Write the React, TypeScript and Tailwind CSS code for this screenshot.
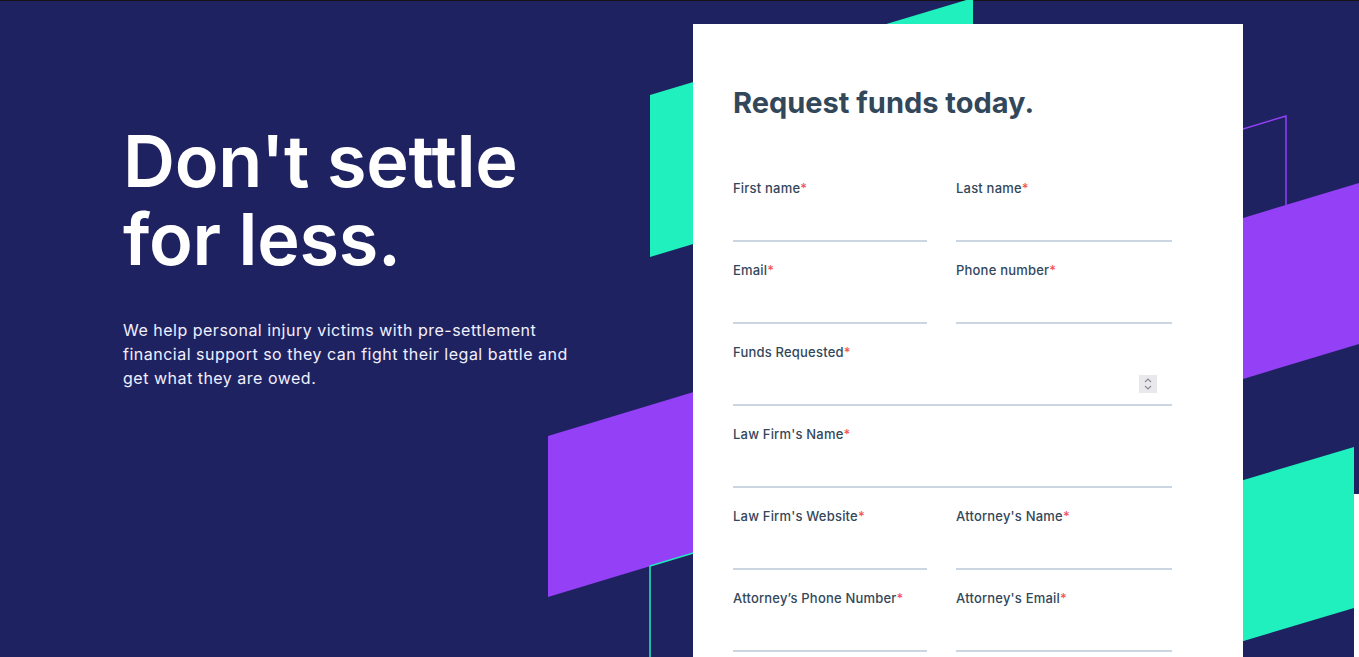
import React from "react";

const font = { fontFamily: '"Inter", "Noto Sans", sans-serif' };

function Label({ text }: { text: string }) {
  return (
    <div className="h-[20px] text-[13px] leading-[20px] font-medium tracking-[0.2px] text-[#33475b]">
      {text}
      <span className="text-[#f2545b]">*</span>
    </div>
  );
}

function Field({ label, inputClass, spinner }: { label: string; inputClass: string; spinner?: boolean }) {
  return (
    <div className="mb-[18px]">
      <Label text={label} />
      <div className={`h-[44px] border-b-2 border-[#cbd6e2] flex items-center justify-end ${inputClass}`}>
        {spinner && (
          <div className="mr-[15px] mt-[2px] w-[18px] h-[18px] bg-[#e9e9ed] flex flex-col items-center justify-center">
            <svg width="10" height="14" viewBox="0 0 10 14" fill="none" stroke="#8a8a92" strokeWidth="1.2">
              <path d="M2 5 L5 2 L8 5" />
              <path d="M2 9 L5 12 L8 9" />
            </svg>
          </div>
        )}
      </div>
    </div>
  );
}

export default function App() {
  return (
    <div className="relative w-full h-[657px] overflow-hidden bg-[#1f2261]" style={font}>
      <svg className="absolute inset-0 z-0" width="1359" height="657" viewBox="0 0 1359 657">
        <rect x="0" y="0" width="1359" height="1" fill="#141414" />
        <polygon points="650,95 973,-2 973,160 650,257" fill="#1ff0bd" />
        <polygon points="548,436 800,360 800,521 548,597" fill="#9340f7" />
        <polyline points="650,700 650,566 800,521" fill="none" stroke="#1ff0bd" strokeWidth="1.5" />
        <polygon points="1200,231 1359,183 1359,344 1200,392" fill="#9340f7" />
        <polyline points="1200,142 1286,116 1286,205" fill="none" stroke="#9340f7" strokeWidth="1.5" />
        <rect x="1354" y="494" width="5" height="163" fill="#ffffff" />
        <polygon points="1200,493 1354,447 1354,608 1200,654" fill="#1ff0bd" />
      </svg>

      <div className="relative z-10 flex">
        <div className="w-[693px] pl-[123px] pt-[122px]">
          <h1 className="text-[72px] font-semibold text-white tracking-[-0.3px]">
            <div className="h-[78px] leading-[78px]">Don't settle</div>
            <div className="h-[78px] leading-[78px]">for less.</div>
          </h1>
          <p className="mt-[40px] w-[452px] text-[16px] leading-[24px] tracking-[0.5px] text-[#f1f0ff]">
            We help personal injury victims with pre-settlement financial support so they can fight their legal battle and get what they are owed.
          </p>
        </div>

        <div className="mt-[24px] w-[550px] h-[800px] bg-white pl-[40px] pt-[59px]">
          <h2 className="text-[29px] leading-[40px] font-bold text-[#33475b]">Request funds today.</h2>
          <div className="mt-[55px] w-[439px]">
            <div className="grid grid-cols-[223px_216px]">
              <Field label="First name" inputClass="w-[194px]" />
              <Field label="Last name" inputClass="w-[216px]" />
              <Field label="Email" inputClass="w-[194px]" />
              <Field label="Phone number" inputClass="w-[216px]" />
            </div>
            <Field label="Funds Requested" inputClass="w-[439px]" spinner />
            <Field label="Law Firm's Name" inputClass="w-[439px]" />
            <div className="grid grid-cols-[223px_216px]">
              <Field label="Law Firm's Website" inputClass="w-[194px]" />
              <Field label="Attorney's Name" inputClass="w-[216px]" />
              <Field label="Attorney’s Phone Number" inputClass="w-[194px]" />
              <Field label="Attorney's Email" inputClass="w-[216px]" />
            </div>
          </div>
        </div>
      </div>
    </div>
  );
}
